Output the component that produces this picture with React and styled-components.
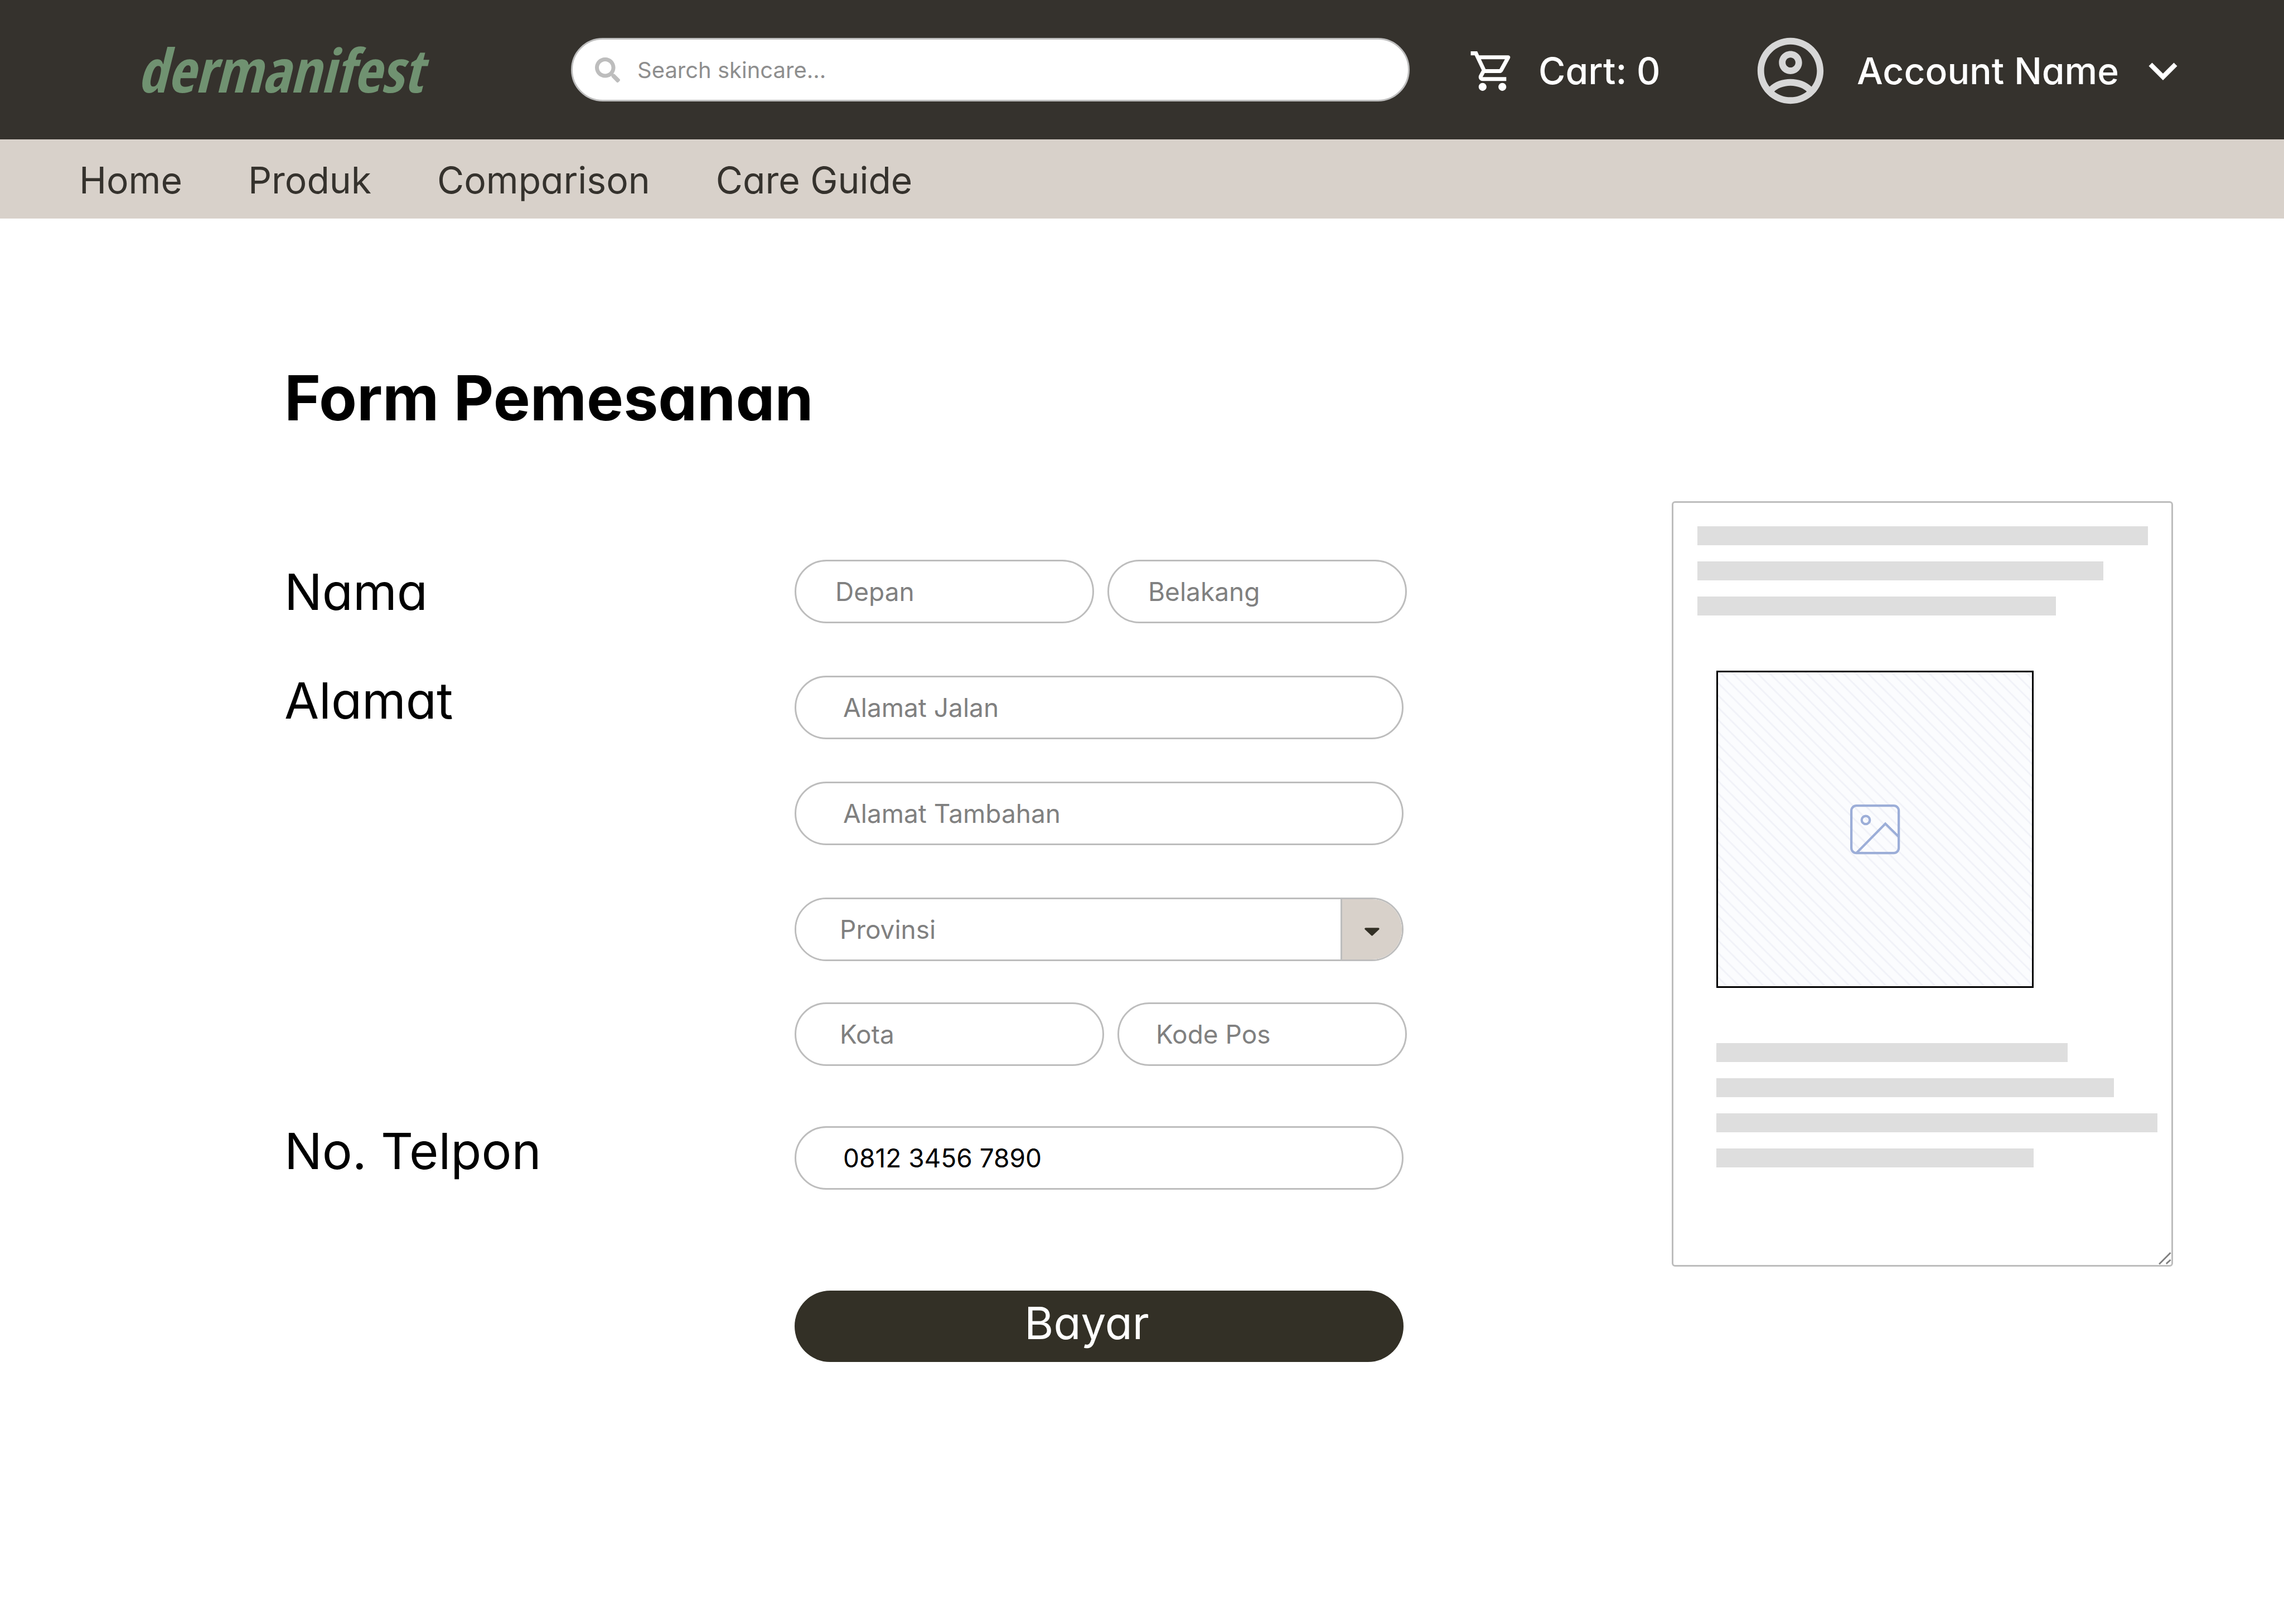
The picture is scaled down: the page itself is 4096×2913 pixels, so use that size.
import React from "react";
import styled, { createGlobalStyle } from "styled-components";
import { MdExpandMore, MdOutlineShoppingCart } from "react-icons/md";
import { FaSearch } from "react-icons/fa";

const color = {
  dark: "#35322d",
  button: "#333026",
  sand: "#d8d1ca",
  line: "#bdbdbd",
  block: "#dedede",
  hint: "#808080",
  brand: "#709271",
};

const GlobalStyle = createGlobalStyle`
  *, *::before, *::after { box-sizing: border-box; }
  body {
    margin: 0;
    background: #fff;
    color: #000;
    font-family: Inter, "Liberation Sans", sans-serif;
  }
  button, input, select { font: inherit; color: inherit; }
`;

const Page = styled.div`
  min-height: 100vh;
`;

/* Single-storey "a" for display text */
const display = `font-feature-settings: "cv11";`;

const Header = styled.header`
  display: flex;
  align-items: center;
  height: 250px;
  padding: 0 166px 0 246px;
  background: ${color.dark};
  color: #fff;
`;

const Logo = styled.a`
  flex: 0 0 778px;
  color: ${color.brand};
  font: italic 700 108px/128px "Open Sans Condensed", Lato, sans-serif;
  text-decoration: none;
`;

const SearchBox = styled.form`
  display: flex;
  flex: 1;
  align-items: center;
  gap: 31px;
  height: 114px;
  margin-right: 106px;
  padding: 0 40px;
  border: 3px solid ${color.line};
  border-radius: 57px;
  background: #fff;
  color: ${color.line};
`;

const SearchInput = styled.input`
  flex: 1;
  min-width: 0;
  padding: 0;
  border: 0;
  outline: 0;
  background: none;
  color: #000;
  font-size: 40px;
  &::placeholder { color: #8e8e8e; opacity: 1; }
`;

const HeaderButton = styled.button`
  display: flex;
  align-items: center;
  gap: ${(p) => p.$gap};
  min-width: ${(p) => p.$minWidth || "0"};
  padding: 4px 0 0;
  border: 0;
  background: none;
  color: #fff;
  font-size: 66px;
  font-weight: 500;
  line-height: 80px;
  white-space: nowrap;
  cursor: pointer;
  ${display}
`;

const AccountLabel = styled.span`
  display: flex;
  align-items: center;
  gap: 28px;
`;

const Nav = styled.nav`
  display: flex;
  align-items: center;
  gap: 118px;
  height: 142px;
  padding: 4px 142px 0;
  background: ${color.sand};
`;

const NavLink = styled.a`
  color: ${color.dark};
  font-size: 66px;
  line-height: 80px;
  text-decoration: none;
  ${display}
`;

const Main = styled.main`
  padding: 252px 199px 200px 510px;
`;

const Title = styled.h1`
  margin: 0 0 115px;
  font-size: 111px;
  font-weight: 700;
  line-height: 140px;
  ${display}
`;

const Content = styled.div`
  display: flex;
  align-items: flex-start;
  gap: 475px;
`;

const OrderForm = styled.form`
  display: flex;
  flex: 1;
  flex-direction: column;
  padding-top: 105px;
`;

const FormRow = styled.div`
  display: grid;
  grid-template-columns: 915px 1fr;
  align-items: start;
  margin-bottom: ${(p) => p.$after};
`;

const Label = styled.label`
  font-size: 90px;
  line-height: ${(p) => (p.$raised ? "90px" : "116px")};
  ${display}
`;

const Stack = styled.div`
  display: flex;
  flex-direction: column;
  gap: ${(p) => p.$gap};
`;

const Pair = styled.div`
  display: grid;
  grid-template-columns: ${(p) => p.$columns};
  gap: 24px;
`;

const Wide = styled.div`
  display: grid;
  padding-right: 6px;
`;

const Input = styled.input`
  width: 100%;
  min-width: 0;
  height: 114px;
  padding: 0 ${(p) => p.$inset};
  border: 3px solid ${color.line};
  border-radius: 57px;
  background: #fff;
  font-size: 46px;
  &::placeholder { color: ${color.hint}; opacity: 1; }
`;

const SelectBox = styled.div`
  display: grid;
  grid-template-columns: 1fr 110px;
  height: 114px;
  border: 3px solid ${color.line};
  border-radius: 57px;
  overflow: hidden;
`;

const Select = styled.select`
  grid-area: 1 / 1 / 2 / 3;
  padding: 0 78px;
  border: 0;
  outline: 0;
  appearance: none;
  background: #fff;
  color: ${color.hint};
  font-size: 46px;
`;

const SelectArrow = styled.span`
  display: flex;
  grid-area: 1 / 2 / 2 / 3;
  align-items: center;
  justify-content: center;
  border-left: 3px solid ${color.line};
  background: ${color.sand};
  pointer-events: none;
`;

const PayButton = styled.button`
  width: 100%;
  height: 128px;
  padding: 0 44px 14px 0;
  border: 0;
  border-radius: 64px;
  background: ${color.button};
  color: #fff;
  font-size: 80px;
  cursor: pointer;
  ${display}
`;

const Summary = styled.aside`
  position: relative;
  flex: 0 0 899px;
  padding: 42px 0 175px 43px;
  border: 3px solid ${color.line};
  border-radius: 6px;
`;

const Lines = styled.div`
  display: flex;
  flex-direction: column;
  gap: 29px;
`;

const Line = styled.div`
  width: ${(p) => p.$width};
  height: 34px;
  background: ${color.block};
`;

const Product = styled.div`
  padding: 99px 0 0 34px;
`;

const Picture = styled.div`
  width: 569px;
  height: 569px;
  margin-bottom: 99px;
  border: 3px solid #000;
  background: #fbfcfe;
  svg { display: block; width: 100%; height: 100%; }
`;

const Grip = styled.svg`
  position: absolute;
  right: 0;
  bottom: 0;
`;

function AccountIcon() {
  return (
    <svg width="142" height="142" viewBox="0 0 24 24" fill="#d7d7d7" aria-hidden="true">
      <path d="M12 2C6.48 2 2 6.48 2 12s4.48 10 10 10 10-4.48 10-10S17.52 2 12 2zM7.07 18.28c.8-.9 2.8-1.78 4.93-1.78s4.13.88 4.93 1.78C15.57 19.36 13.86 20 12 20s-3.57-.64-4.93-1.72zm11.29-1.45c-1.5-1.5-3.9-2.33-6.36-2.33s-4.86.83-6.36 2.33C4.62 15.49 4 13.82 4 12c0-4.41 3.59-8 8-8s8 3.59 8 8c0 1.82-.62 3.49-1.64 4.83z" />
      <path d="M12 6c-1.94 0-3.5 1.56-3.5 3.5S10.06 13 12 13s3.5-1.56 3.5-3.5S13.94 6 12 6zm0 5c-.83 0-1.5-.67-1.5-1.5S11.17 8 12 8s1.5.67 1.5 1.5S12.83 11 12 11z" />
    </svg>
  );
}

function PicturePlaceholder() {
  return (
    <svg viewBox="0 0 563 563" role="img" aria-label="Gambar produk">
      <defs>
        <pattern id="hatch" width="22" height="22" patternUnits="userSpaceOnUse">
          <path d="M-19 -22L25 22M-19 0L25 44M3 -22L47 22" stroke="#f1f2f8" strokeWidth="3" />
        </pattern>
      </defs>
      <rect width="563" height="563" fill="url(#hatch)" />
      <g transform="translate(237 237) scale(0.607)" fill="none" stroke="#9caed8" strokeWidth="7">
        <rect x="3.5" y="3.5" width="140" height="140" rx="15" />
        <circle cx="46" cy="46" r="12" />
        <path d="M19 143L104 57l39 38" />
      </g>
    </svg>
  );
}

const navItems = ["Home", "Produk", "Comparison", "Care Guide"];
const introLines = ["808px", "728px", "643px"];
const detailLines = ["630px", "713px", "791px", "569px"];

export default function App() {
  return (
    <Page>
      <GlobalStyle />
      <Header>
        <Logo href="#">dermanifest</Logo>
        <SearchBox role="search">
          <FaSearch size={45} aria-hidden="true" />
          <SearchInput type="search" aria-label="Search skincare" placeholder="Search skincare..." />
        </SearchBox>
        <HeaderButton type="button" $gap="40px" $minWidth="506px">
          <MdOutlineShoppingCart size={85} aria-hidden="true" />
          Cart: 0
        </HeaderButton>
        <HeaderButton type="button" $gap="48px">
          <AccountIcon />
          <AccountLabel>
            Account Name
            <MdExpandMore size={102} aria-hidden="true" />
          </AccountLabel>
        </HeaderButton>
      </Header>
      <Nav>
        {navItems.map((item) => (
          <NavLink key={item} href="#">{item}</NavLink>
        ))}
      </Nav>
      <Main>
        <Title>Form Pemesanan</Title>
        <Content>
          <OrderForm>
            <FormRow $after="92px">
              <Label htmlFor="depan">Nama</Label>
              <Pair $columns="1fr 1fr">
                <Input id="depan" $inset="70px" placeholder="Depan" />
                <Input aria-label="Nama belakang" $inset="70px" placeholder="Belakang" />
              </Pair>
            </FormRow>
            <FormRow $after="108px">
              <Label htmlFor="jalan" $raised>Alamat</Label>
              <Stack $gap="94px">
                <Stack $gap="76px">
                  <Wide><Input id="jalan" $inset="84px" placeholder="Alamat Jalan" /></Wide>
                  <Wide><Input aria-label="Alamat tambahan" $inset="84px" placeholder="Alamat Tambahan" /></Wide>
                </Stack>
                <Stack $gap="74px">
                  <Wide>
                    <SelectBox>
                      <Select aria-label="Provinsi" defaultValue="">
                        <option value="">Provinsi</option>
                      </Select>
                      <SelectArrow>
                        <svg width="27" height="23" viewBox="0 0 38 32" aria-hidden="true">
                          <path d="M3 14H35L19 29Z" fill={color.button} stroke={color.button} strokeWidth="5" strokeLinejoin="round" />
                        </svg>
                      </SelectArrow>
                    </SelectBox>
                  </Wide>
                  <Pair $columns="555fr 519fr">
                    <Input aria-label="Kota" $inset="78px" placeholder="Kota" />
                    <Input aria-label="Kode pos" $inset="66px" placeholder="Kode Pos" />
                  </Pair>
                </Stack>
              </Stack>
            </FormRow>
            <FormRow $after="181px">
              <Label htmlFor="telpon" $raised>No. Telpon</Label>
              <Wide><Input id="telpon" type="tel" $inset="84px" defaultValue="0812 3456 7890" /></Wide>
            </FormRow>
            <FormRow $after="0">
              <span />
              <Wide><PayButton type="button">Bayar</PayButton></Wide>
            </FormRow>
          </OrderForm>
          <Summary>
            <Lines>
              {introLines.map((width) => <Line key={width} $width={width} />)}
            </Lines>
            <Product>
              <Picture><PicturePlaceholder /></Picture>
              <Lines>
                {detailLines.map((width) => <Line key={width} $width={width} />)}
              </Lines>
            </Product>
            <Grip width="24" height="24" viewBox="0 0 34 34" stroke="#7f7f7f" strokeWidth="4" aria-hidden="true">
              <path d="M3 32L32 3M21 31L32 21" />
            </Grip>
          </Summary>
        </Content>
      </Main>
    </Page>
  );
}
